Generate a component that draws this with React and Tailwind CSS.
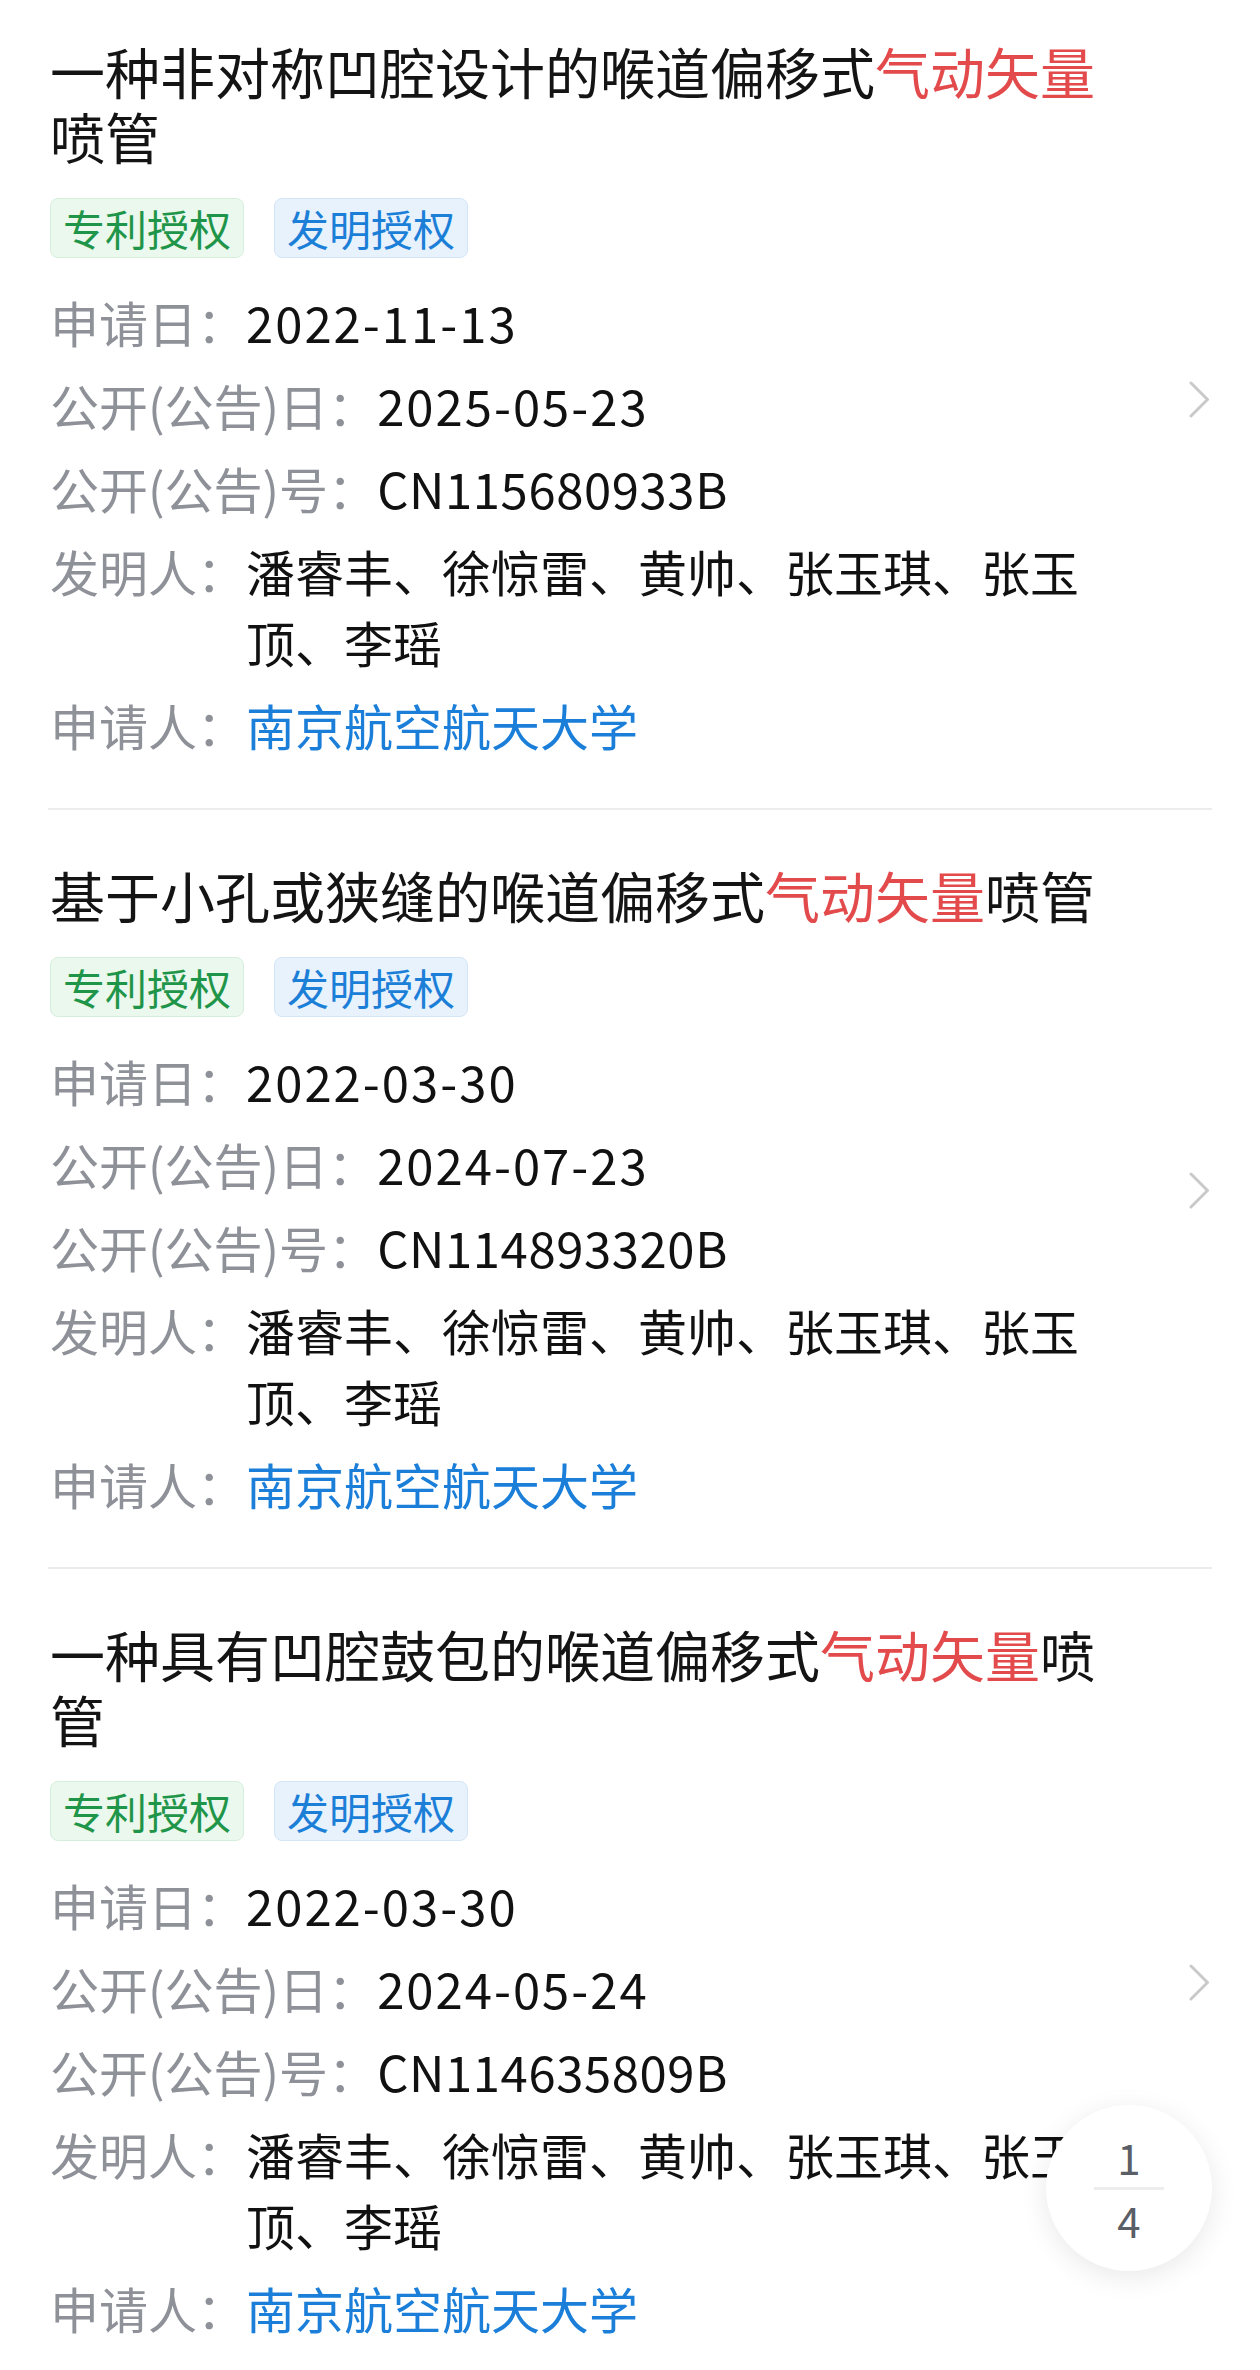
import React from "react";

const patents = [
    {
        pre: "一种非对称凹腔设计的喉道偏移式",
        hl: "气动矢量",
        post: "喷管",
        applyDate: "2022-11-13",
        pubDate: "2025-05-23",
        pubNo: "CN115680933B",
    },
    {
        pre: "基于小孔或狭缝的喉道偏移式",
        hl: "气动矢量",
        post: "喷管",
        applyDate: "2022-03-30",
        pubDate: "2024-07-23",
        pubNo: "CN114893320B",
    },
    {
        pre: "一种具有凹腔鼓包的喉道偏移式",
        hl: "气动矢量",
        post: "喷管",
        applyDate: "2022-03-30",
        pubDate: "2024-05-24",
        pubNo: "CN114635809B",
    },
];

const inventors = "潘睿丰、徐惊雷、黄帅、张玉琪、张玉顶、李瑶";
const applicant = "南京航空航天大学";

function Row({ label, children, last }) {
    return (
        <div className={`flex text-[49px] leading-[71px] ${last ? "" : "mb-[12px]"}`}>
            <span className="shrink-0 text-[#8e9198]">{label}</span>
            <span className="flex-1">{children}</span>
        </div>
    );
}

function Chevron() {
    return (
        <svg width="22" height="37" viewBox="0 0 22 37" fill="none">
            <polyline
                points="3,2 19.5,18.5 3,35"
                stroke="#c9c9c9"
                strokeWidth="3"
                strokeLinecap="round"
                strokeLinejoin="round"
            />
        </svg>
    );
}

function PatentCard({ p, first }) {
    return (
        <div
            className={`flex items-center border-b-[2px] border-[#ececec] ${first ? "pt-[38px]" : "pt-[52px]"} pb-[48px]`}
        >
            <div className="w-[1057px] pl-[2px]">
                {/* titre */}
                <h2 className="text-[55px] leading-[65px] font-normal text-[#141414]">
                    {p.pre}
                    <span className="text-[#e34a4c]">{p.hl}</span>
                    {p.post}
                </h2>

                {/* tags */}
                <div className="flex gap-[30px] mt-[30px] mb-[28px]">
                    <span className="px-[12px] h-[60px] leading-[58px] text-[42px] rounded-[8px] border border-[#d6efdd] bg-[#eaf8ee] text-[#1f9549]">
                        专利授权
                    </span>
                    <span className="px-[12px] h-[60px] leading-[58px] text-[42px] rounded-[8px] border border-[#d3e5f6] bg-[#e7f2fd] text-[#1b7fd8]">
                        发明授权
                    </span>
                </div>

                <div className="text-[#111]">
                    <Row label="申请日：">
                        <span className="tracking-[2px]">{p.applyDate}</span>
                    </Row>
                    <Row label="公开(公告)日：">
                        <span className="tracking-[2px]">{p.pubDate}</span>
                    </Row>
                    <Row label="公开(公告)号：">
                        <span className="tracking-[0.6px]">{p.pubNo}</span>
                    </Row>
                    <Row label="发明人：">{inventors}</Row>
                    <Row label="申请人：" last>
                        <span className="text-[#1b7fd9]">{applicant}</span>
                    </Row>
                </div>
            </div>
            <div className="ml-auto mr-[2px]">
                <Chevron />
            </div>
        </div>
    );
}

export default function App() {
    return (
        <div
            className="relative w-[1260px] h-[2370px] overflow-hidden bg-white"
            style={{ fontFamily: '"Noto Sans CJK SC", "Noto Sans", sans-serif' }}
        >
            <div className="px-[48px]">
                {patents.map((p, i) => (
                    <PatentCard key={p.pubNo} p={p} first={i === 0} />
                ))}
            </div>

            {/* indicateur de page */}
            <div className="absolute right-[48px] top-[2105px] w-[166px] h-[166px] rounded-full bg-white shadow-[0_6px_28px_rgba(0,0,0,0.09)] flex flex-col items-center justify-center text-[#5a5e66] text-[42px]">
                <span className="leading-[44px]">1</span>
                <span className="block w-[70px] h-[3px] bg-[#ededed] my-[8px]" />
                <span className="leading-[44px]">4</span>
            </div>
        </div>
    );
}
